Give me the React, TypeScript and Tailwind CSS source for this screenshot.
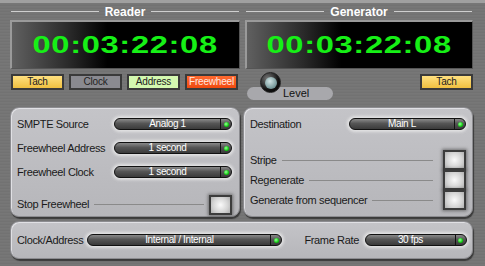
import React from "react";

const font = { fontFamily: '"Liberation Sans", Arial, sans-serif' };

function Header({ title }: { title: string }) {
  return (
    <div className="flex items-center h-[17px] gap-[6px] px-[1px]">
      <div className="flex-1 h-px bg-[#cfcfcf]" />
      <span className="text-[12px] font-bold text-white leading-none">{title}</span>
      <div className="flex-1 h-px bg-[#cfcfcf]" />
    </div>
  );
}

function Display() {
  return (
    <div className="h-[49px] border-t-2 border-l-2 border-[#9a9a9a] border-r border-b border-r-[#555] border-b-[#555] bg-[linear-gradient(to_right,#606060,#2a2a2a_25%,#000_42%)] flex items-center justify-center overflow-hidden">
      <span className="text-[24px] font-bold text-[#16f016] leading-none scale-x-[1.36] tracking-[0.5px]">
        00:03:22:08
      </span>
    </div>
  );
}

function Chip({ label, bg }: { label: string; bg: string }) {
  return (
    <div className={`w-[53px] h-[16px] border-2 border-[#3a3a3a] flex items-center justify-center text-[10px] text-[#222] leading-none tracking-[-0.2px] ${bg}`}>
      {label}
    </div>
  );
}

function Dropdown({ text, w }: { text: string; w: string }) {
  return (
    <div className={`${w} shrink-0 h-[12px] rounded-full border border-[#111] bg-[linear-gradient(to_bottom,#8a8a8a,#555_45%,#3a3a3a)] flex shadow-[0_0_3px_2px_rgba(235,235,235,0.8)]`}>
      <div className="flex-1 flex items-center justify-center text-[10px] text-white leading-none">{text}</div>
      <div className="w-[11px] border-l border-[#111] flex items-center justify-center">
        <div className="w-[5px] h-[5px] rounded-full bg-[radial-gradient(circle_at_40%_40%,#9f9,#1c1_60%,#070)]" />
      </div>
    </div>
  );
}

function Square() {
  return (
    <div className="w-[23px] h-[20px] shrink-0 border-2 border-[#3c3c3c] bg-[radial-gradient(circle_at_50%_50%,#fafafa,#d4d4d4_60%,#b0b0b0)] shadow-[0_0_3px_1px_rgba(60,60,60,0.6)]" />
  );
}

function Line() {
  return <div className="flex-1 h-px bg-[#8a8a8a] mx-[5px]" />;
}

const panel =
  "rounded-[9px] bg-[linear-gradient(to_bottom,#c4c4c8,#b6b6ba)] border border-[#8c8c90] shadow-[inset_1px_1px_0_#e0e0e4,1px_2px_1px_#3a3a3a] text-[11px] text-[#1a1a1a] tracking-[-0.35px] whitespace-nowrap";

export default function App() {
  return (
    <div
      style={font}
      className="w-[485px] h-[266px] overflow-hidden relative bg-[repeating-linear-gradient(to_bottom,#727272_0px,#7c7c7c_1px,#6e6e6e_2px,#767676_3px)]"
    >
      <div className="h-[3px] bg-[#a0a0a0]" />
      <div className="flex gap-[5px] pl-[10px]">
        {/* Reader */}
        <div className="w-[230px]">
          <Header title="Reader" />
          <Display />
          <div className="flex gap-[5px] mt-[5px] pl-[1px]">
            <Chip label="Tach" bg="bg-[linear-gradient(to_bottom,#ffe080,#f0c040)]" />
            <Chip label="Clock" bg="bg-[#8a8a90]" />
            <Chip label="Address" bg="bg-[#d4f8b0]" />
            <Chip label="Freewheel" bg="bg-[linear-gradient(to_bottom,#ff6a30,#f04a10)] text-[#ffe8e0]" />
          </div>
        </div>
        {/* Generator */}
        <div className="w-[228px]">
          <Header title="Generator" />
          <Display />
          <div className="flex justify-between mt-[5px] relative h-[26px]">
            <div className="mt-[13px] ml-[2px] w-[86px] h-[13px] rounded-full bg-[#a8a8ac] flex items-center pl-[36px] text-[11px] text-[#111] leading-none">
              Level
            </div>
            <div className="absolute left-[15px] top-[-2px] w-[21px] h-[21px] rounded-full bg-[radial-gradient(circle_at_35%_30%,#777,#111_60%,#000)] border border-[#222] flex items-center justify-center">
              <div className="w-[12px] h-[12px] rounded-full bg-[radial-gradient(circle_at_40%_35%,#cfe2e2,#7fa0a2_60%,#4d6a6c)]" />
            </div>
            <Chip label="Tach" bg="bg-[linear-gradient(to_bottom,#ffe080,#f0c040)]" />
          </div>
        </div>
      </div>

      <div className="flex gap-[3px] pl-[10px] mt-[7px]">
        <div className={`${panel} w-[230px] h-[110px] pl-[6px] pr-[7px] pt-[10px] flex flex-col`}>
          <div className="flex items-center justify-between h-[12px]">
            <span>SMPTE Source</span>
            <Dropdown text="Analog 1" w="w-[118px]" />
          </div>
          <div className="flex items-center justify-between h-[12px] mt-[12px]">
            <span>Freewheel Address</span>
            <Dropdown text="1 second" w="w-[118px]" />
          </div>
          <div className="flex items-center justify-between h-[12px] mt-[12px]">
            <span>Freewheel Clock</span>
            <Dropdown text="1 second" w="w-[118px]" />
          </div>
          <div className="flex items-center h-[21px] mt-[16px]">
            <span>Stop Freewheel</span>
            <Line />
            <Square />
          </div>
        </div>

        <div className={`${panel} w-[230px] h-[110px] pl-[6px] pr-[6px] pt-[10px] flex flex-col`}>
          <div className="flex items-center justify-between h-[12px]">
            <span>Destination</span>
            <Dropdown text="Main L" w="w-[117px]" />
          </div>
          <div className="flex mt-[20px]">
            <div className="flex-1 flex flex-col">
              <div className="flex items-center h-[20px]"><span>Stripe</span><Line /></div>
              <div className="flex items-center h-[20px]"><span>Regenerate</span><Line /></div>
              <div className="flex items-center h-[20px]"><span>Generate from sequencer</span><Line /></div>
            </div>
            <div className="flex flex-col ml-[5px]">
              <Square />
              <Square />
              <Square />
            </div>
          </div>
        </div>
      </div>

      <div className={`${panel} ml-[10px] mt-[4px] w-[463px] h-[38px] pl-[6px] pr-[6px] flex items-center`}>
        <span>Clock/Address</span>
        <div className="ml-[4px]"><Dropdown text="Internal / Internal" w="w-[195px]" /></div>
        <span className="ml-[22px]">Frame Rate</span>
        <div className="ml-[6px]"><Dropdown text="30 fps" w="w-[102px]" /></div>
      </div>
    </div>
  );
}
